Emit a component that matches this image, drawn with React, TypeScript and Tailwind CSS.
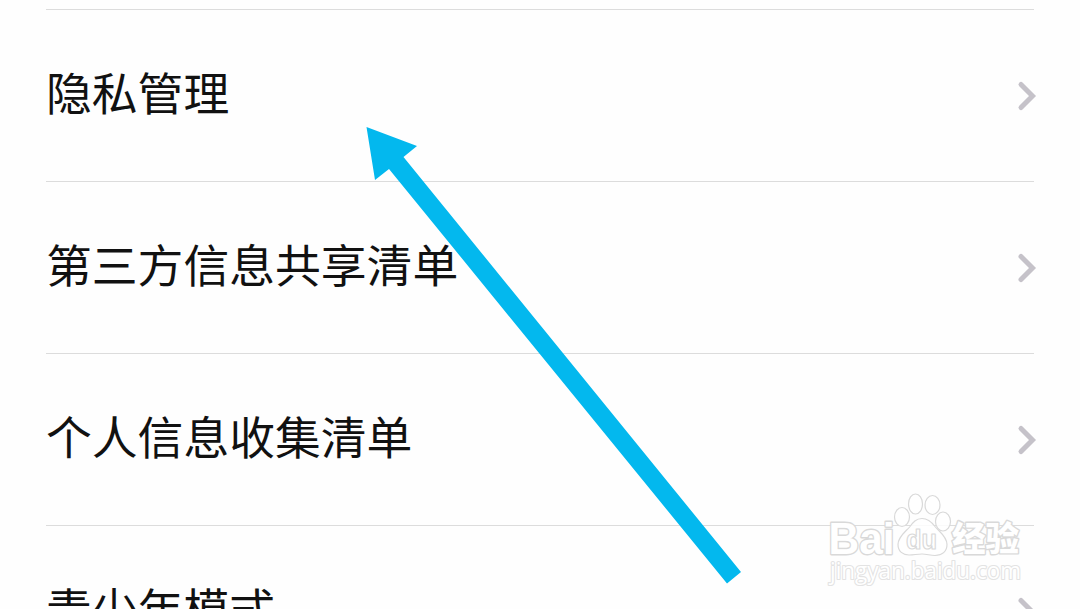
const items = [
  { id: "privacy", label: "隐私管理" },
  { id: "third-party", label: "第三方信息共享清单" },
  { id: "personal-info", label: "个人信息收集清单" },
  { id: "teen-mode", label: "青少年模式" },
];

function Chevron() {
  return (
    <svg width="20" height="32" viewBox="0 0 20 32" fill="none" className="-mr-[3px] shrink-0">
      <path d="M4 4.5 15.5 16 4 27.5" stroke="#c5c2c9" strokeWidth="5" strokeLinecap="round" />
    </svg>
  );
}

function SettingRow({ label }: { label: string }) {
  return (
    <li className="flex h-[172px] shrink-0 items-center justify-between border-b border-[#dcdcdc]">
      <span className="pb-[7px] text-[45.8px] leading-none text-[#111111]">{label}</span>
      <Chevron />
    </li>
  );
}

function Pointer() {
  return (
    <svg className="absolute inset-0" width="1080" height="609" viewBox="0 0 1080 609">
      <path d="M366.5 127 417 146 403.5 157 741 572 727 583.5 389 169 375 180Z" fill="#03b8ee" />
    </svg>
  );
}

function Watermark() {
  return (
    <svg
      className="absolute top-[485px] left-[820px]"
      width="220"
      height="124"
      viewBox="0 0 220 124"
      fill="#fff"
      fillOpacity="0.85"
      stroke="#d9d9d9"
      strokeWidth="1.2"
      strokeLinejoin="round"
    >
      <ellipse cx="82" cy="32" rx="7.5" ry="9.5" />
      <ellipse cx="95.5" cy="19" rx="7" ry="10" />
      <ellipse cx="112.5" cy="20" rx="7.5" ry="9.5" />
      <ellipse cx="123" cy="36.5" rx="7.5" ry="9.5" />
      <path d="M102 33.5c-6 0-9 4-12 8-4 5-12 10-12 18 0 7 5 10.500 11 10.500 5 0 8-1 13-1s8 1.500 13 1.500c7 0 12-4 12-11 0-8-8-13-12-18-3-4-7-8-13-8Z" />
      <g className="font-['Liberation_Sans','Noto_Sans_CJK_SC',sans-serif]">
        <g strokeWidth="2.8" paintOrder="stroke" fillOpacity="1">
          <text x="8.500" y="68.500" fontSize="45" fontWeight="700" textLength="66" lengthAdjust="spacingAndGlyphs">Bai</text>
          <text x="132" y="65.500" fontSize="34" fontWeight="900" textLength="67" lengthAdjust="spacingAndGlyphs">经验</text>
        </g>
        <text x="86" y="64" fontSize="27" fontWeight="700" textLength="31" lengthAdjust="spacingAndGlyphs">du</text>
      </g>
      <text
        x="10"
        y="94"
        fontSize="23"
        strokeWidth="2.2"
        paintOrder="stroke"
        fillOpacity="1"
        textLength="191"
        lengthAdjust="spacingAndGlyphs"
        className="font-['Open_Sans',sans-serif]"
        stroke="#e3e3e3"
      >
        jingyan.baidu.com
      </text>
    </svg>
  );
}

export default function App() {
  return (
    <main className="relative h-[609px] w-[1080px] overflow-hidden bg-[#fefefe] font-['Noto_Sans_CJK_SC',sans-serif]">
      <ul className="mt-[9px] mr-[46px] ml-[46px] flex flex-col border-t border-[#dcdcdc]">
        {items.map((item) => (
          <SettingRow key={item.id} label={item.label} />
        ))}
      </ul>
      <Pointer />
      <Watermark />
    </main>
  );
}
